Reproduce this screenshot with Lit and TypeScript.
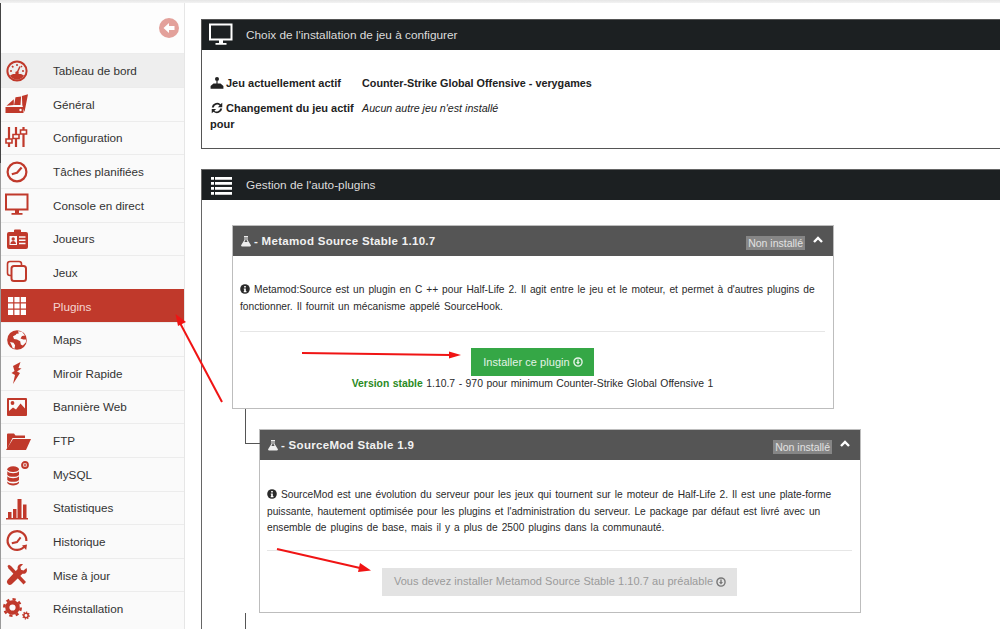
import { LitElement, html, css, svg } from "lit";
import { customElement } from "lit/decorators.js";

const gear = (cx: number, cy: number, r: number, w: number, tr: number, tw: number) => svg`
  <circle cx=${cx} cy=${cy} r=${r} fill="none" stroke="currentColor" stroke-width=${w}/>
  <circle cx=${cx} cy=${cy} r=${tr} fill="none" stroke="currentColor" stroke-width=${tw} pathLength="16" stroke-dasharray="1"/>`;

const icons: Record<string, unknown> = {
  gauge: svg`<circle cx="12" cy="12" r="9.6" fill="none" stroke="currentColor" stroke-width="2"/><path d="M5 16.5a8 8 0 0 0 14 0l-3-1.5H8z" fill="currentColor"/><circle cx="12" cy="14" r="1.8" fill="currentColor"/><path d="M12 14l3-6.5" stroke="currentColor" stroke-width="1.5"/><path d="M12 5v2M7 7l1.4 1.4M17 7l-1 1M5 12h2M17 12h2" stroke="currentColor" stroke-width="1.5"/>`,
  fan: svg`<path d="M.5 15h18v6H.5zM1.500 13.700L8.800 7.300V13zM10.500 5.300L16.100 4.600 15.500 13H9.100zM16.900 4L23 2.300 19.500 20 17.300 13z" fill="currentColor"/><circle cx="15.500" cy="18" r="1.200" fill="#fafafa"/>`,
  sliders: svg`<path d="M4 1v20M11 1v20M18.500 1v20" stroke="currentColor" stroke-width="2.2"/><path d="M1 13h6v4H1zM8 8.500h6v4H8zM15.500 4h6v4h-6z" fill="#fafafa" stroke="currentColor" stroke-width="1.6"/>`,
  clock: svg`<circle cx="12" cy="12" r="9.4" fill="none" stroke="currentColor" stroke-width="2.2"/><path d="M6.8 14.2L12 12.8 16.6 7.6" fill="none" stroke="currentColor" stroke-width="2.2" stroke-linejoin="round"/>`,
  monitor: svg`<rect x="1" y="1.5" width="21.500" height="15" fill="none" stroke="currentColor" stroke-width="2"/><path d="M10 17h4v3h3.500v1.800h-11V20H10z" fill="currentColor"/>`,
  badge: svg`<path d="M4 5h5V3.4a1 1 0 0 1 1-1h5a1 1 0 0 1 1 1V5h5a2 2 0 0 1 2 2v13a2 2 0 0 1-2 2H4a2 2 0 0 1-2-2V7a2 2 0 0 1 2-2z" fill="currentColor"/><rect x="4.500" y="9" width="7.500" height="9" fill="#fafafa"/><circle cx="8.200" cy="12" r="1.700" fill="currentColor"/><path d="M5.400 17c0-4 5.600-4 5.600 0z" fill="currentColor"/><path d="M14 10h6.500M14 13.200h6.500M14 16.400h6.500" stroke="#fafafa" stroke-width="1.500"/>`,
  copy: svg`<rect x="2.500" y="1.500" width="14" height="14" rx="2.500" fill="none" stroke="currentColor" stroke-width="1.600"/><rect x="6.500" y="6" width="14.500" height="15" rx="2.500" fill="#fafafa" stroke="currentColor" stroke-width="2"/>`,
  grid: svg`<path d="M3 3h5.200v5.200H3zM9.400 3h5.200v5.200H9.400zM15.800 3H21v5.200h-5.200zM3 9.400h5.200v5.200H3zM9.400 9.400h5.200v5.200H9.400zM15.800 9.400H21v5.200h-5.200zM3 15.800h5.200V21H3zM9.400 15.800h5.200V21H9.400zM15.800 15.800H21V21h-5.200z" fill="currentColor"/>`,
  globe: svg`<circle cx="12" cy="12" r="9.800" fill="currentColor"/><path d="M13 3.200l4 .6 3 3.600-3 .6-1.500 2.400 2.800 1 3 .2-.5 3-3 3-2-1.200-.6-3.200-3.200-1.800-3-.5-1-2.600 2.600-1.200 1-1.400 2.200-.3zM5 14l3.500.8 1.600 2.500-.6 3.500-1.800-.8-1.200-3z" fill="#fafafa"/>`,
  bolt: svg`<path d="M15.500 1L8 5l1.500 5-3 2 3.500 2-2 9 7-11-3-1.500L16.500 7.500l-3-.5z" fill="currentColor"/>`,
  image: svg`<rect x="2" y="3" width="20" height="18" rx="1" fill="currentColor"/><rect x="4" y="5" width="16" height="13" fill="#fafafa"/><circle cx="7.500" cy="8" r="1.900" fill="currentColor"/><path d="M4 16l4-3.500 3 2 4.500-6 4.500 5V18H4z" fill="currentColor"/>`,
  folder: svg`<path d="M2 20V5.500a1 1 0 0 1 1-1h6l1.500 2H20v2.500H7.500z" fill="currentColor"/><path d="M8 10h18l-5 11H1z" fill="currentColor"/>`,
  db: svg`<g transform="translate(1.500 1.500) scale(.78 .95)"><ellipse cx="8.500" cy="6" rx="7.500" ry="3" fill="currentColor"/><path d="M1 8.200c2 2.600 13 2.600 15 0V12c-2 2.600-13 2.600-15 0zM1 13.500c2 2.600 13 2.600 15 0v3.800c-2 2.600-13 2.600-15 0zM1 19c2 2.600 13 2.600 15 0v1.500c-2 3.400-13 3.400-15 0z" fill="currentColor"/></g><circle cx="20" cy="3" r="3" fill="#fafafa" stroke="currentColor" stroke-width="1.800"/><path d="M20 1.500v3M18.500 3h3" stroke="currentColor" stroke-width="1"/>`,
  bars: svg`<path d="M1 22h22v1.500H1zM3 16h3.500v6H3zM8 13h3.500v9H8zM12.500 3h4v19h-4zM18 8.500h3.500V22H18z" fill="currentColor"/>`,
  history: svg`<path d="M20 16.500A9.400 9.400 0 1 1 21.400 12" fill="none" stroke="currentColor" stroke-width="2.200"/><path d="M17 16.500l5-1-.8 5.500z" fill="currentColor"/><path d="M6.800 14.200L12 13l3.600-4.600" fill="none" stroke="currentColor" stroke-width="2"/>`,
  tools: svg`<path d="M6 3L21 19l-2.500 2.500L3.500 5.500 2.500 3 4 1.800z" fill="currentColor"/><path d="M21.500 5l-3 2.500-2.500-.8-.7-2.600L18 1.300c-3.400-1-6 1.400-5.300 4.800L2.500 17a3 3 0 0 0 4.200 4.200L17.500 10.700c3.200.8 5.500-2 4-5.700z" fill="currentColor"/>`,
  gears: svg`${gear(7.500, 10.500, 5.200, 4.200, 8.200, 2.600)}${gear(21, 18.500, 2.200, 1.600, 3.300, 1.200)}`,
  gamepad: svg`<circle cx="12" cy="5" r="3.500" fill="currentColor"/><path d="M11 8h2v6h-2zM1 17l5-4h12l5 4v5H1z" fill="currentColor"/>`,
  refresh: svg`<path d="M3 11a9 9 0 0 1 15-5.500L21 3v7.500h-7.500l3-3A6 6 0 0 0 6.500 11zM21 13a9 9 0 0 1-15 5.500L3 21v-7.500h7.500l-3 3A6 6 0 0 0 17.500 13z" fill="currentColor"/>`,
  info: svg`<circle cx="12" cy="12" r="11.500" fill="currentColor"/><path d="M10 5h4v3.500h-4zM9 10.500h5V17h1.500v2.500h-6.500V17h1v-4H9z" fill="#fff"/>`,
  flask: svg`<path d="M8 2h8v2h-1v5.500l6.500 10.500a2 2 0 0 1-1.700 3H4.200a2 2 0 0 1-1.700-3L9 9.500V4H8zM11 4v6.200L8.800 14h6.400L13 10.200V4z" fill="currentColor"/>`,
  download: svg`<circle cx="12" cy="12" r="9.800" fill="none" stroke="currentColor" stroke-width="3.400"/><path d="M10.300 6h3.400v6h3l-4.700 6-4.700-6h3z" fill="currentColor"/>`,
  list: svg`<path d="M2 4h3v2.700H2zM6 4h17v2.700H6zM2 9h3v2.700H2zM6 9h17v2.700H6zM2 14h3v2.700H2zM6 14h17v2.700H6zM2 19h3v2.700H2zM6 19h17v2.700H6z" fill="currentColor"/>`,
};

const icon = (name: string, cls = "") =>
  html`<svg class=${cls} viewBox="0 0 24 24" aria-hidden="true">${icons[name]}</svg>`;

const menu: [string, string][] = [
  ["gauge", "Tableau de bord"],
  ["fan", "Général"],
  ["sliders", "Configuration"],
  ["clock", "Tâches planifiées"],
  ["monitor", "Console en direct"],
  ["badge", "Joueurs"],
  ["copy", "Jeux"],
  ["grid", "Plugins"],
  ["globe", "Maps"],
  ["bolt", "Miroir Rapide"],
  ["image", "Bannière Web"],
  ["folder", "FTP"],
  ["db", "MySQL"],
  ["bars", "Statistiques"],
  ["history", "Historique"],
  ["tools", "Mise à jour"],
  ["gears", "Réinstallation"],
];

@customElement("app-root")
export class AppRoot extends LitElement {
  static styles = css`
    :host {
      display: block;
      position: relative;
      width: 1000px;
      height: 629px;
      overflow: hidden;
      background: #fff;
      font-family: "Liberation Sans", Arial, sans-serif;
      font-size: 12px;
      color: #222;
    }
    .topshade {
      height: 3px;
      background: linear-gradient(#e6e6e6, #f3f3f3);
    }
    .layout {
      display: flex;
      height: 626px;
    }
    .leftline {
      width: 1px;
      flex: none;
      background: linear-gradient(#444 160px, #9a9a9a 160px);
    }
    .side {
      width: 183px;
      flex: none;
      border-right: 1px solid #e6e6e6;
      background: #fafafa;
    }
    .top {
      height: 50.4px;
      background: #fdfdfd;
      display: flex;
      justify-content: flex-end;
      align-items: flex-start;
      padding: 15px 5px 0 0;
      box-sizing: border-box;
    }
    .back {
      width: 20px;
      height: 20px;
      border-radius: 50%;
      background: #e3a19b;
      display: flex;
      align-items: center;
      justify-content: center;
    }
    .back svg {
      width: 12px;
      height: 12px;
    }
    .row {
      height: 33.63px;
      box-sizing: border-box;
      display: flex;
      align-items: center;
      border-top: 1px solid #ececec;
      font-size: 11.7px;
      color: #333;
      background: #fafafa;
    }
    .row.cur {
      background: #eee;
    }
    .row.on {
      background: #c0392b;
      color: #f5d5d1;
      border-top-color: #c0392b;
    }
    .ic {
      width: 52px;
      flex: none;
      display: flex;
      justify-content: center;
      padding-right: 20px;
      box-sizing: border-box;
      color: #c0392b;
    }
    .ic svg {
      width: 24px;
      height: 24px;
      overflow: visible;
    }
    .row.on .ic {
      color: #fff;
    }
    .main {
      flex: 1;
      min-width: 0;
      padding: 16px 0 0 16px;
      display: flex;
      flex-direction: column;
      gap: 20px;
    }
    .panel {
      width: 820px;
      border: 1px solid #555;
      box-sizing: border-box;
      background: #fff;
      flex: none;
    }
    .p1 {
      height: 130px;
    }
    .p2 {
      height: 470px;
      border-color: #666;
    }
    .phead {
      height: 30px;
      background: #1c2022;
      color: #dcdcdc;
      display: flex;
      align-items: center;
      font-size: 11.8px;
    }
    .phead svg {
      width: 24px;
      height: 24px;
      color: #fff;
      margin: 0 13px 0 7px;
      flex: none;
    }
    .pbody1 {
      padding: 25px 8px 0;
      display: grid;
      grid-template-columns: 152px 1fr;
      font-weight: bold;
      font-size: 11px;
      line-height: 16px;
      color: #222;
      row-gap: 9px;
    }
    .pbody1 svg {
      width: 14px;
      height: 14px;
      vertical-align: -3px;
      margin-right: 2px;
    }
    .pbody1 .val {
      font-size: 10.8px;
    }
    .pbody1 i {
      font-weight: normal;
      font-size: 10.7px;
    }
    .pbody2 {
      padding: 25px 0 0 30px;
    }
    .card {
      width: 602px;
      box-sizing: border-box;
      border: 1px solid #bdbdbd;
      background: #fff;
    }
    .chead {
      height: 30px;
      background: #555;
      color: #f1f1f1;
      font-weight: bold;
      font-size: 11.5px;
      letter-spacing: 0.3px;
      display: flex;
      align-items: center;
      padding: 0 8px 0 7px;
    }
    .chead > svg {
      width: 12px;
      height: 12px;
      margin-right: 2px;
      color: #eee;
    }
    .chead .tag {
      margin: 3px 0 0 auto;
      background: #868686;
      color: #e2e2e2;
      font-weight: normal;
      font-size: 10.5px;
      letter-spacing: 0;
      padding: 1px 2px;
      line-height: 12px;
    }
    .chead > .chev {
      width: 10px;
      height: 7px;
      margin: 0 2px 4px 8px;
      fill: none;
      stroke: #fff;
      stroke-width: 2.4;
    }
    .cbody {
      padding: 26px 8px 0 7px;
      font-size: 10.2px;
      word-spacing: 1.15px;
      line-height: 16.5px;
      color: #2a2a2a;
    }
    .cbody p {
      margin: 0;
    }
    .cbody p svg {
      width: 10px;
      height: 10px;
      vertical-align: -1px;
    }
    hr {
      border: 0;
      border-top: 1px solid #e6e6e6;
      margin: 16px 0 16px;
    }
    .act {
      text-align: center;
    }
    .btn {
      display: inline-flex;
      align-items: center;
      height: 28px;
      padding: 0 11px 0 12px;
      font-size: 11px;
      word-spacing: 0;
      gap: 3px;
      letter-spacing: 0.05px;
    }
    .btn svg {
      width: 10px;
      height: 10px;
    }
    .btn.go {
      background: #35a746;
      color: #e4f3e6;
    }
    .btn.off {
      background: #e3e3e3;
      color: #9a9a9a;
    }
    .btn.off svg {
      color: #777;
    }
    .ver {
      line-height: 15px;
      padding-bottom: 17px;
      font-size: 10.4px;
      word-spacing: 0.6px;
    }
    .ver b {
      color: #2a8a1e;
    }
    .child {
      position: relative;
      margin: 20px 0 0 27px;
    }
    .child::before {
      content: "";
      position: absolute;
      left: -15px;
      top: -21px;
      width: 14px;
      height: 34px;
      border-left: 1px solid #555;
      border-bottom: 1px solid #555;
    }
    .child::after {
      content: "";
      position: absolute;
      left: -15px;
      top: 183px;
      height: 30px;
      border-left: 1px solid #555;
    }
    .child .cbody {
      padding-top: 27px;
    }
    .child hr {
      margin: 13px 0 17px;
    }
    .child .act {
      padding-bottom: 16px;
    }
    .arrows {
      position: absolute;
      inset: 0;
      width: 1000px;
      height: 629px;
      pointer-events: none;
    }
  `;

  render() {
    return html`
      <div class="topshade"></div>
      <div class="layout">
        <div class="leftline"></div>
        <nav class="side">
          <div class="top">
            <div class="back">
              <svg viewBox="0 0 12 12"><path d="M0.500 6L6 1v3h5.500v4H6v3z" fill="#fff" /></svg>
            </div>
          </div>
          ${menu.map(
            ([ic, label], i) => html`<div class="row ${i === 0 ? "cur" : ""} ${i === 7 ? "on" : ""}">
              <span class="ic">${icon(ic)}</span><span>${label}</span>
            </div>`
          )}
        </nav>
        <main class="main">
          <section class="panel p1">
            <div class="phead">${icon("monitor")}<span>Choix de l'installation de jeu à configurer</span></div>
            <div class="pbody1">
              <div>${icon("gamepad")}Jeu actuellement actif</div>
              <div class="val">Counter-Strike Global Offensive - verygames</div>
              <div>${icon("refresh")}Changement du jeu actif pour</div>
              <div><i>Aucun autre jeu n'est installé</i></div>
            </div>
          </section>
          <section class="panel p2">
            <div class="phead">${icon("list")}<span>Gestion de l'auto-plugins</span></div>
            <div class="pbody2">
              <article class="card">
                <div class="chead">
                  ${icon("flask")}<span>- Metamod Source Stable 1.10.7</span>
                  <span class="tag">Non installé</span>
                  <svg class="chev" viewBox="0 0 10 7"><path d="M1 6l4-4 4 4" /></svg>
                </div>
                <div class="cbody">
                  <p>
                    ${icon("info")} Metamod:Source est un plugin en C ++ pour Half-Life 2. Il agit entre le jeu et le
                    moteur, et permet à d'autres plugins de fonctionner. Il fournit un mécanisme appelé SourceHook.
                  </p>
                  <hr />
                  <div class="act">
                    <span class="btn go">Installer ce plugin ${icon("download")}</span>
                    <div class="ver">
                      <b>Version stable</b> 1.10.7 - 970 pour minimum Counter-Strike Global Offensive 1
                    </div>
                  </div>
                </div>
              </article>
              <article class="card child">
                <div class="chead">
                  ${icon("flask")}<span>- SourceMod Stable 1.9</span>
                  <span class="tag">Non installé</span>
                  <svg class="chev" viewBox="0 0 10 7"><path d="M1 6l4-4 4 4" /></svg>
                </div>
                <div class="cbody">
                  <p>
                    ${icon("info")} SourceMod est une évolution du serveur pour les jeux qui tournent sur le moteur de
                    Half-Life 2. Il est une plate-forme puissante, hautement optimisée pour les plugins et
                    l'administration du serveur. Le package par défaut est livré avec un ensemble de plugins de base,
                    mais il y a plus de 2500 plugins dans la communauté.
                  </p>
                  <hr />
                  <div class="act">
                    <span class="btn off">Vous devez installer Metamod Source Stable 1.10.7 au préalable ${icon("download")}</span>
                  </div>
                </div>
              </article>
            </div>
          </section>
        </main>
      </div>
      <svg class="arrows" viewBox="0 0 1000 629" aria-hidden="true">
        <path d="M222 402L180 323" stroke="#f01414" stroke-width="2" fill="none" />
        <path d="M175.500 314L186 322 178 326z" fill="#f01414" />
        <path d="M302 353L450 355" stroke="#f01414" stroke-width="2" fill="none" />
        <path d="M461 355L449 351.500V358.500z" fill="#f01414" />
        <path d="M277 549L360 568" stroke="#f01414" stroke-width="2" fill="none" />
        <path d="M371 570.500L358 572 360 563z" fill="#f01414" />
      </svg>
    `;
  }
}
